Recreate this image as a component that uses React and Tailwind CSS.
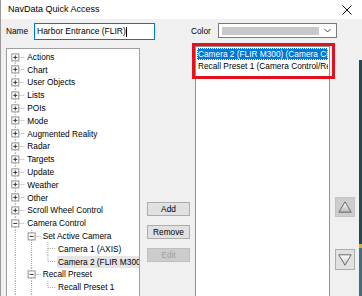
import React from "react";

// Tree data: level, expander state ("open" | "closed" | null)
const tree = [
  { label: "Actions", level: 0, kids: "closed" },
  { label: "Chart", level: 0, kids: "closed" },
  { label: "User Objects", level: 0, kids: "closed" },
  { label: "Lists", level: 0, kids: "closed" },
  { label: "POIs", level: 0, kids: "closed" },
  { label: "Mode", level: 0, kids: "closed" },
  { label: "Augmented Reality", level: 0, kids: "closed" },
  { label: "Radar", level: 0, kids: "closed" },
  { label: "Targets", level: 0, kids: "closed" },
  { label: "Update", level: 0, kids: "closed" },
  { label: "Weather", level: 0, kids: "closed" },
  { label: "Other", level: 0, kids: "closed" },
  { label: "Scroll Wheel Control", level: 0, kids: "closed" },
  { label: "Camera Control", level: 0, kids: "open" },
  { label: "Set Active Camera", level: 1, kids: "open" },
  { label: "Camera 1 (AXIS)", level: 2, kids: null },
  { label: "Camera 2 (FLIR M300)", level: 2, kids: null, selected: true },
  { label: "Recall Preset", level: 1, kids: "open" },
  { label: "Recall Preset 1", level: 2, kids: null },
  { label: "Go to Preset", level: 1, kids: "closed" },
  { label: "Media", level: 0, kids: "closed" },
];

const ROW_H = 12.8;
const cx = (k) => 8.3 + k * 16.3;

// does a row at column k continue below row i (ancestor/self has a later sibling)
function cont(i, k) {
  for (let j = i + 1; j < tree.length; j++) {
    if (tree[j].level < k) return false;
    if (tree[j].level === k) return true;
  }
  return false;
}

function TreeLines({ i, item }) {
  const L = item.level;
  const gw = 19.3 + L * 15.4;
  const cy = ROW_H / 2;
  const dash = { stroke: "#a0a0a0", strokeWidth: 1, strokeDasharray: "1 1" };
  const lines = [];
  for (let k = 0; k < L; k++) {
    if (cont(i, k)) lines.push(<line key={"a" + k} x1={cx(k)} y1={0} x2={cx(k)} y2={ROW_H} style={dash} />);
  }
  const x = cx(L);
  lines.push(<line key="v" x1={x} y1={i === 0 ? cy : 0} x2={x} y2={cont(i, L) ? ROW_H : cy} style={dash} />);
  lines.push(<line key="h" x1={x} y1={cy} x2={gw - 1} y2={cy} style={dash} />);
  return (
    <svg width={gw} height={ROW_H} className="shrink-0 block">
      {lines}
      {item.kids && (
        <g>
          <rect x={x - 3.5} y={cy - 3.5} width={7} height={7} fill="#fff" stroke="#919191" strokeWidth="1" />
          <line x1={x - 2} y1={cy} x2={x + 2} y2={cy} stroke="#333" strokeWidth="1" />
          {item.kids === "closed" && <line x1={x} y1={cy - 2} x2={x} y2={cy + 2} stroke="#333" strokeWidth="1" />}
        </g>
      )}
    </svg>
  );
}

function Btn({ children, disabled }) {
  return (
    <div
      className={`h-[14px] w-[43px] flex items-center justify-center border text-[8.3px] ${
        disabled ? "bg-[#cccccc] border-[#bfbfbf] text-[#a0a0a0]" : "bg-[#e1e1e1] border-[#adadad] text-black"
      }`}
    >
      {children}
    </div>
  );
}

export default function App() {
  return (
    <div className="w-[362px] h-[296px] overflow-hidden bg-[#f0f0f0] border-l border-[#9a9a9a] flex flex-col font-['Liberation_Sans',Arial,sans-serif] text-black">
      {/* title bar */}
      <div className="h-[19px] bg-white flex items-center pl-[7px] shrink-0">
        <span className="text-[9px]">NavData Quick Access</span>
        <svg width="10" height="10" viewBox="0 0 10 10" className="ml-auto mr-[10px]">
          <path d="M0.5 0.5 L9.5 9.5 M9.5 0.5 L0.5 9.5" stroke="#111" strokeWidth="1" />
        </svg>
      </div>

      {/* name / color row */}
      <div className="flex items-center pl-[5px] mt-[4px] h-[17px] shrink-0 text-[8.3px]">
        <span className="w-[28px]">Name</span>
        <div className="w-[121px] h-[17px] bg-white border border-[#0078d7] flex items-center pl-[2px] text-[8.5px]">
          <span>Harbor Entrance (FLIR)</span>
          <span className="w-px h-[10px] bg-black" />
        </div>
        <span className="ml-[36px] w-[27px]">Color</span>
        <div className="w-[119px] h-[15px] self-start bg-white border border-[#7a7a7a] flex items-center pl-[3px] pr-[5px]">
          <div className="w-[97px] h-[8px] bg-[#c8c8c8]" />
          <svg width="7" height="5" viewBox="0 0 7 5" className="ml-auto">
            <path d="M0.5 1 L3.5 4 L6.5 1" fill="none" stroke="#444" strokeWidth="1" />
          </svg>
        </div>
      </div>

      {/* main area */}
      <div className="flex items-start pl-[5px] mt-[6px] text-[8.3px] shrink-0">
        {/* tree */}
        <div className="mt-[2px] w-[134px] h-[260px] shrink-0 bg-white border border-[#a0a0a0] overflow-hidden pt-[1.5px]">
          {tree.map((item, i) => (
            <div key={i} className="flex items-center whitespace-nowrap" style={{ height: ROW_H }}>
              <TreeLines i={i} item={item} />
              <span className={`pl-[1px] pr-[4px] leading-[12px] ${item.selected ? "bg-[#e5e5e5] flex-1" : ""}`}>
                {item.label}
              </span>
            </div>
          ))}
        </div>

        {/* buttons */}
        <div className="ml-[7px] mt-[156px] flex flex-col gap-[9px] shrink-0">
          <Btn>Add</Btn>
          <Btn>Remove</Btn>
          <Btn disabled>Edit</Btn>
        </div>

        {/* selected list */}
        <div className="relative ml-[5px] w-[135px] h-[260px] shrink-0 bg-white border border-[#8f8f96] pt-[1px] px-[1px]">
          <div className="h-[12.4px] bg-[#0078d7] text-white flex items-center pl-[1px] whitespace-nowrap overflow-hidden outline-1 outline-dotted outline-offset-[-1px] outline-[#ffffff]">
            Camera 2 (FLIR M300) (Camera Control/Set Active Camera)
          </div>
          <div className="h-[12.4px] flex items-center pl-[1px] whitespace-nowrap overflow-hidden">
            Recall Preset 1 (Camera Control/Recall Preset)
          </div>
          <div className="absolute left-[-4px] top-[-4.5px] w-[143px] h-[36px] border-[3px] border-[#e3111b] pointer-events-none" />
        </div>

        {/* up / down */}
        <div className="ml-[5px] mt-[151px] flex flex-col gap-[32px] shrink-0">
          <div className="w-[20px] h-[20px] bg-[#cdcdcd] border border-[#c4c4c4] flex items-center justify-center">
            <svg width="14" height="12" viewBox="0 0 14 12">
              <defs>
                <linearGradient id="gu" x1="0" y1="0" x2="0" y2="1">
                  <stop offset="0" stopColor="#ffffff" />
                  <stop offset="1" stopColor="#b8b8b8" />
                </linearGradient>
              </defs>
              <path d="M7 0.8 L13.2 11.2 L0.8 11.2 Z" fill="url(#gu)" stroke="#6a6a6a" strokeWidth="1" />
            </svg>
          </div>
          <div className="w-[20px] h-[21px] bg-[#e1e1e1] border border-[#adadad] flex items-center justify-center">
            <svg width="14" height="12" viewBox="0 0 14 12">
              <defs>
                <linearGradient id="gd" x1="0" y1="0" x2="0" y2="1">
                  <stop offset="0" stopColor="#ffffff" />
                  <stop offset="1" stopColor="#c8c8c8" />
                </linearGradient>
              </defs>
              <path d="M0.8 0.8 L13.2 0.8 L7 11.2 Z" fill="url(#gd)" stroke="#6a6a6a" strokeWidth="1" />
            </svg>
          </div>
        </div>

        {/* desktop edge showing past the window frame */}
        <div className="ml-auto mt-[14px] w-[3px] h-[240px] shrink-0 flex flex-col">
          <div className="h-[184px] bg-[#1f4a5a]" />
          <div className="h-[4px] bg-[#c8b820]" />
          <div className="flex-1 bg-[#3a6f86]" />
        </div>
      </div>
    </div>
  );
}
